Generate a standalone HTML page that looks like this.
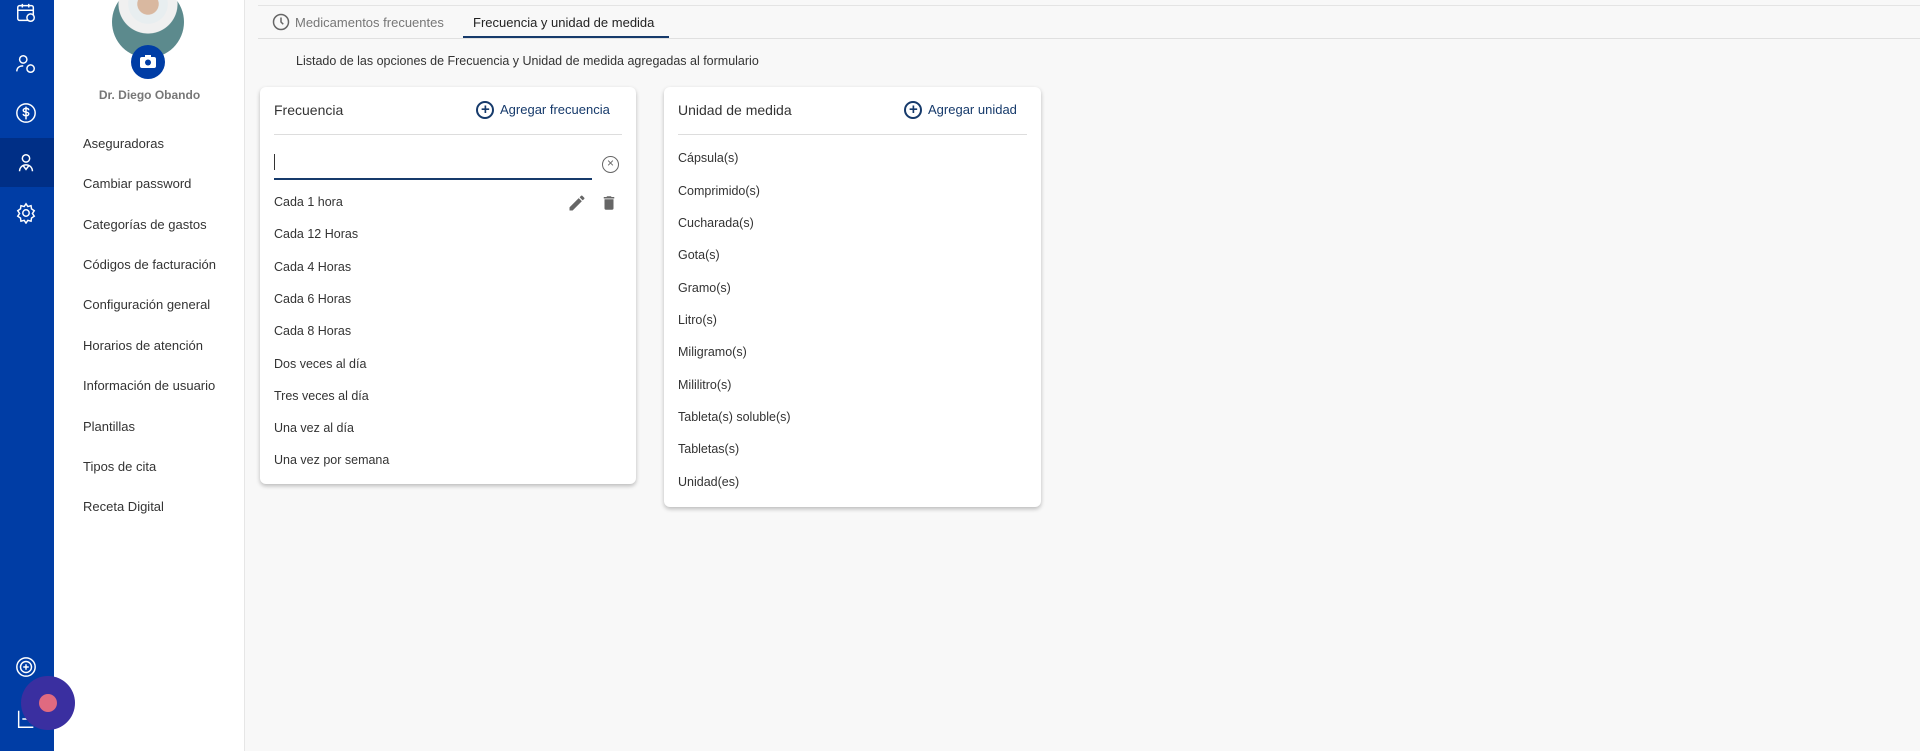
<!DOCTYPE html>
<html><head><meta charset="utf-8"><style>
*{margin:0;padding:0;box-sizing:border-box}
body{width:1920px;height:751px;overflow:hidden;background:#f8f8f8;font-family:"Liberation Sans",sans-serif;color:#333;position:relative}
.rail{position:absolute;left:0;top:0;width:54px;height:751px;background:#003da5}
.rail .act{position:absolute;left:0;top:138px;width:54px;height:49px;background:#002f86}
.rail svg{position:absolute;left:15px}
.panel{position:absolute;left:54px;top:0;width:191px;height:751px;background:#fff;border-right:1px solid #e6e6e6}
.avatar{position:absolute;left:112px;top:-14px;width:72px;height:72px;border-radius:50%;background:radial-gradient(circle at 50% 25%,#d9b8a0 0 16%,#e8eef0 17% 30%,#f0f0f0 31% 45%,#5c8a8d 46%);overflow:hidden}
.cam{position:absolute;left:131px;top:45px;width:34px;height:34px;border-radius:50%;background:#003da5}
.name{position:absolute;left:54px;width:191px;top:88px;text-align:center;font-size:12px;font-weight:bold;color:#777}
.nav{position:absolute;left:83px;font-size:13px;color:#333}
.tabs{position:absolute;left:258px;right:0;top:5px;height:34px;border-top:1px solid #e4e4e4;border-bottom:1px solid #e0e0e0}
.tab{position:absolute;top:9px;font-size:13px}
.ul{position:absolute;left:463px;width:206px;top:36px;height:2px;background:#163a6b}
.desc{position:absolute;left:296px;top:54px;font-size:12.5px;color:#333}
.card{position:absolute;top:87px;background:#fff;border-radius:6px;box-shadow:0 2px 4px rgba(0,0,0,.25)}
.ct{position:absolute;left:14px;top:15px;font-size:14px;color:#333}
.add{position:absolute;top:15px;font-size:13px;color:#163a6b}
.add:before{content:"";position:absolute;left:-24px;top:-1px;width:14px;height:14px;border:2px solid #163a6b;border-radius:50%}
.add i{position:absolute;left:-19px;top:-1px;font-style:normal;font-weight:bold;font-size:15px}
.div{position:absolute;left:14px;right:14px;top:47px;height:1px;background:#ddd}
.row{position:absolute;left:14px;font-size:12.5px;color:#333}
</style></head><body>
<div class="rail"><div class="act"></div>
<svg style="top:2px" width="22" height="22" viewBox="0 0 24 24" fill="none" stroke="#fff" stroke-width="1.6"><rect x="3" y="4" width="17" height="16" rx="2"/><path d="M3 9h17M8 2v4M15 2v4"/><circle cx="17" cy="17" r="4" fill="#003da5"/></svg>
<svg style="top:53px" width="22" height="22" viewBox="0 0 24 24" fill="none" stroke="#fff" stroke-width="1.6"><circle cx="9" cy="7" r="4"/><path d="M2 20c0-4 3-6 7-6"/><circle cx="17" cy="17" r="4"/></svg>
<svg style="top:102px" width="22" height="22" viewBox="0 0 24 24" fill="none" stroke="#fff" stroke-width="1.6"><circle cx="12" cy="12" r="10"/><path d="M15 9c0-1.5-1.5-2-3-2s-3 .8-3 2 1.5 1.8 3 2 3 .8 3 2-1.5 2-3 2-3-.5-3-2M12 5v14"/></svg>
<svg style="top:152px" width="22" height="22" viewBox="0 0 24 24" fill="none" stroke="#fff" stroke-width="1.6"><circle cx="12" cy="7" r="4"/><path d="M5 21c0-4 3-7 7-7s7 3 7 7M9 15l3 4 3-4"/></svg>
<svg style="top:202px" width="22" height="22" viewBox="0 0 24 24" fill="none" stroke="#fff" stroke-width="1.6"><circle cx="12" cy="12" r="3.5"/><path d="M12 2l2 3 3.5-1 .5 3.5 3 2-2 3 2 3-3 2-.5 3.5-3.5-1-2 3-2-3-3.5 1L6 17.5l-3-2 2-3-2-3 3-2L6.5 4l3.5 1z"/></svg>
<svg style="top:656px" width="22" height="22" viewBox="0 0 24 24" fill="none" stroke="#fff" stroke-width="1.6"><circle cx="12" cy="12" r="10"/><circle cx="12" cy="12" r="6"/><path d="M12 9v6M9 12h6"/></svg>
<svg style="top:708px" width="22" height="22" viewBox="0 0 24 24" fill="none" stroke="#fff" stroke-width="1.6"><path d="M4 3v18h16M8 12h12M16 8l4 4-4 4"/></svg>
</div>
<div class="panel"></div>
<div class="avatar"></div>
<div class="cam"><svg style="position:absolute;left:8px;top:9px" width="18" height="16" viewBox="0 0 18 16"><rect x="1" y="3" width="16" height="11" rx="2" fill="#fff"/><rect x="6" y="1" width="6" height="3" fill="#fff"/><circle cx="9" cy="8.5" r="3" fill="#003da5"/></svg></div>
<div class="name">Dr. Diego Obando</div>
<div class="nav" style="top:136px">Aseguradoras</div>
<div class="nav" style="top:176px">Cambiar password</div>
<div class="nav" style="top:217px">Categorías de gastos</div>
<div class="nav" style="top:257px">Códigos de facturación</div>
<div class="nav" style="top:297px">Configuración general</div>
<div class="nav" style="top:338px">Horarios de atención</div>
<div class="nav" style="top:378px">Información de usuario</div>
<div class="nav" style="top:419px">Plantillas</div>
<div class="nav" style="top:459px">Tipos de cita</div>
<div class="nav" style="top:499px">Receta Digital</div>
<div style="position:absolute;left:21px;top:676px;width:54px;height:54px;border-radius:50%;background:#3a2fa0"><div style="position:absolute;left:18px;top:18px;width:18px;height:18px;border-radius:50%;background:#e06a80"></div></div>
<div class="tabs">
<svg style="position:absolute;left:14px;top:7px" width="18" height="18" viewBox="0 0 24 24" fill="none" stroke="#666" stroke-width="2"><circle cx="12" cy="12" r="10"/><path d="M12 6v6l3 3"/></svg>
<div class="tab" style="left:37px;color:#777">Medicamentos frecuentes</div>
<div class="tab" style="left:215px;color:#222">Frecuencia y unidad de medida</div>
</div>
<div class="ul"></div>
<div class="desc">Listado de las opciones de Frecuencia y Unidad de medida agregadas al formulario</div>
<div class="card" style="left:260px;width:376px;height:397px">
<div class="ct">Frecuencia</div><div class="add" style="left:240px"><i>+</i>Agregar frecuencia</div>
<div class="div"></div>
<div style="position:absolute;left:14px;top:67px;width:1px;height:16px;background:#333"></div>
<div style="position:absolute;left:14px;top:91px;width:318px;height:2px;background:#163a6b"></div>
<div style="position:absolute;left:342px;top:69px;width:17px;height:17px;border:1.6px solid #666;border-radius:50%;text-align:center;font-size:12px;line-height:13px;color:#666">×</div>
<svg style="position:absolute;left:307px;top:106px" width="20" height="20" viewBox="0 0 24 24"><path fill="#666" d="M3 17.25V21h3.75L17.8 9.94l-3.75-3.75zM20.7 7.04a1 1 0 000-1.41l-2.34-2.34a1 1 0 00-1.41 0l-1.830 1.83 3.75 3.75z"/></svg>
<svg style="position:absolute;left:340px;top:106px" width="18" height="20" viewBox="0 0 24 24"><path fill="#666" d="M6 19a2 2 0 002 2h8a2 2 0 002-2V7H6zM19 4h-3.5l-1-1h-5l-1 1H5v2h14z"/></svg>
<div class="row" style="top:108px">Cada 1 hora</div>
<div class="row" style="top:140px">Cada 12 Horas</div>
<div class="row" style="top:173px">Cada 4 Horas</div>
<div class="row" style="top:205px">Cada 6 Horas</div>
<div class="row" style="top:237px">Cada 8 Horas</div>
<div class="row" style="top:270px">Dos veces al día</div>
<div class="row" style="top:302px">Tres veces al día</div>
<div class="row" style="top:334px">Una vez al día</div>
<div class="row" style="top:366px">Una vez por semana</div>
</div>
<div class="card" style="left:664px;width:377px;height:420px">
<div class="ct">Unidad de medida</div><div class="add" style="left:264px"><i>+</i>Agregar unidad</div>
<div class="div"></div>
<div class="row" style="top:64px">Cápsula(s)</div>
<div class="row" style="top:97px">Comprimido(s)</div>
<div class="row" style="top:129px">Cucharada(s)</div>
<div class="row" style="top:161px">Gota(s)</div>
<div class="row" style="top:194px">Gramo(s)</div>
<div class="row" style="top:226px">Litro(s)</div>
<div class="row" style="top:258px">Miligramo(s)</div>
<div class="row" style="top:291px">Mililitro(s)</div>
<div class="row" style="top:323px">Tableta(s) soluble(s)</div>
<div class="row" style="top:355px">Tabletas(s)</div>
<div class="row" style="top:388px">Unidad(es)</div>
</div>
</body></html>
